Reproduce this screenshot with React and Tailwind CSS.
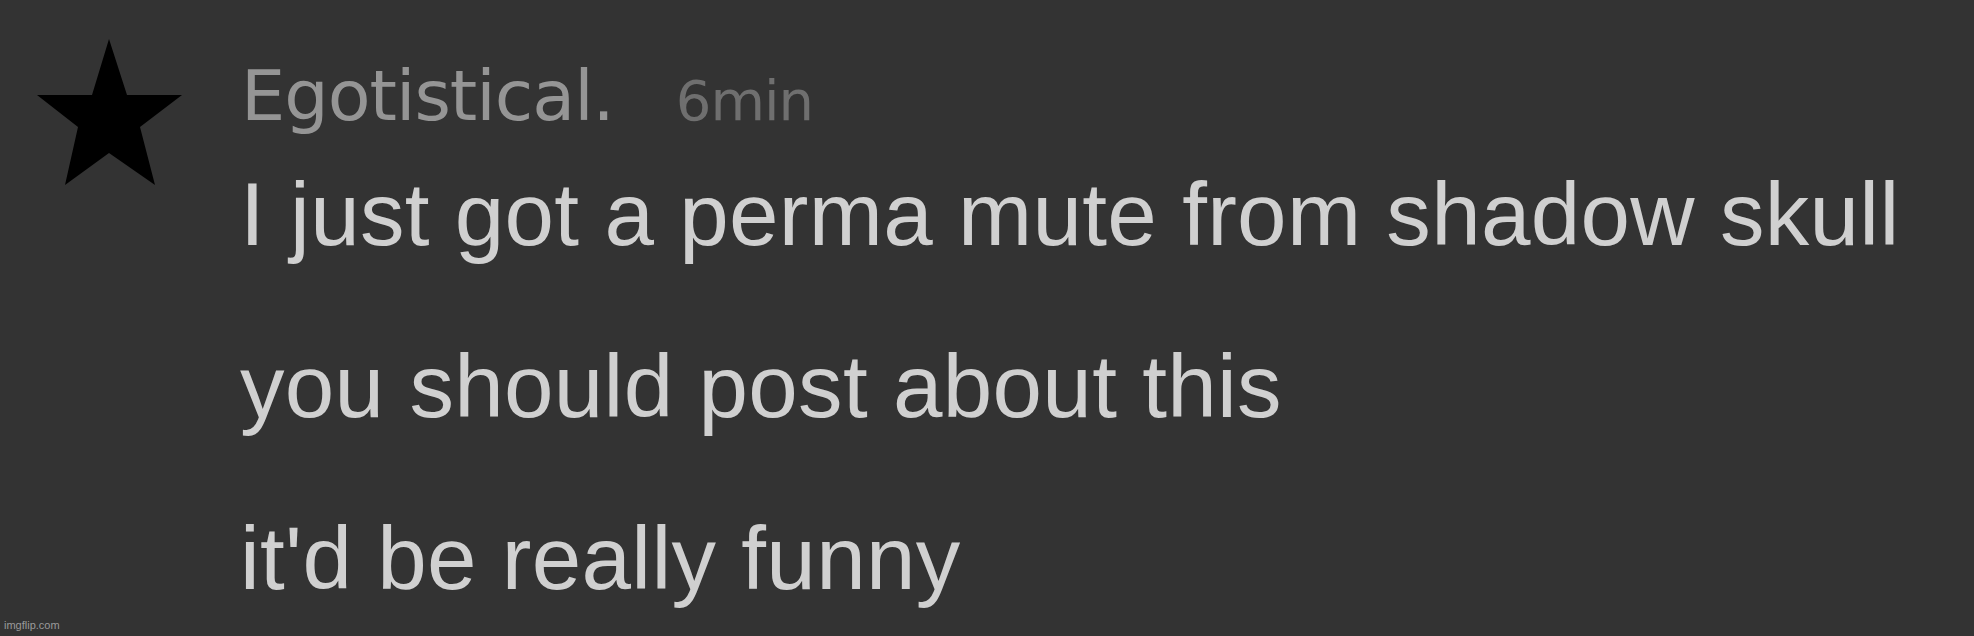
import React from 'react';

const Star = () => (
  <svg width="146" height="147" viewBox="0 0 146 147" className="shrink-0">
    <polygon
      points="72,0 90,56 145,56 103,88 118,146 72,114 28,146 41,88 0,56 55,56"
      fill="#000"
    />
  </svg>
);

const lines = [
  'I just got a perma mute from shadow skull',
  'you should post about this',
  "it'd be really funny",
];

export default function App() {
  return (
    <div className="relative w-[1974px] h-[636px] overflow-hidden bg-[#333333]">
      <div className="flex pl-[37px] pt-[39px] gap-[58px]">
        <Star />
        <div className="flex flex-col">
          <div className="flex items-baseline gap-[62px] mt-[7px] font-['DejaVu_Sans',sans-serif]">
            <span className="text-[70px] leading-[100px] text-[#959595] tracking-[-1px]">Egotistical.</span>
            <span className="text-[56px] leading-[100px] text-[#6f6f6f] tracking-[-1px]">6min</span>
          </div>
          <div className="font-['Liberation_Sans',Arial,sans-serif] text-[89px] text-[#d0d0d0] leading-[172px] tracking-[0.3px] -mt-[23px] -ml-[1px]">
            {lines.map((l) => (
              <div key={l}>{l}</div>
            ))}
          </div>
        </div>
      </div>
      <div className="absolute left-[4px] bottom-[3px] font-['Liberation_Sans',Arial,sans-serif] text-[11px] text-[#9a9a9a]">
        imgflip.com
      </div>
    </div>
  );
}
